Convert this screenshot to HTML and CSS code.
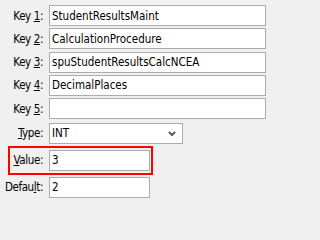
FILE: index.html
```html
<!DOCTYPE html>
<html>
<head>
<meta charset="utf-8">
<link rel="stylesheet" href="styles.css">
</head>
<body>
<div class="form">
  <div class="row key"><label class="lbl">Key <u>1</u>:</label><input class="field" value="StudentResultsMaint"></div>
  <div class="row key"><label class="lbl">Key <u>2</u>:</label><input class="field" value="CalculationProcedure"></div>
  <div class="row key"><label class="lbl">Key <u>3</u>:</label><input class="field" value="spuStudentResultsCalcNCEA"></div>
  <div class="row key"><label class="lbl">Key <u>4</u>:</label><input class="field" value="DecimalPlaces"></div>
  <div class="row key"><label class="lbl">Key <u>5</u>:</label><input class="field" value=""></div>
  <div class="row type"><label class="lbl"><u>T</u>ype:</label>
    <div class="select"><span>INT</span><svg class="chev" width="8" height="5" viewBox="0 0 8 5"><path d="M0.9 0.9 L4 4 L7.1 0.9" fill="none" stroke="#555555" stroke-width="2"/></svg></div>
  </div>
  <div class="row value"><label class="lbl"><u>V</u>alue:</label><input class="field short" value="3"></div>
  <div class="row default"><label class="lbl">Defau<u>l</u>t:</label><input class="field short" value="2"></div>
</div>
</body>
</html>
```
FILE: styles.css
```css
html, body {
  margin: 0;
  padding: 0;
  background: #f0f0f0;
}
body {
  font-family: "DejaVu Sans Condensed", "Liberation Sans", sans-serif;
  font-size: 11.5px;
  color: #000;
}
.form {
  box-sizing: border-box;
  width: 271px;
  display: flex;
  flex-direction: column;
  padding: 5px 5px 0 8px;
}
.row {
  display: grid;
  grid-template-columns: 35px 1fr;
  column-gap: 6px;
  align-items: center;
  justify-items: start;
}
.row.key + .row.key {
  margin-top: 2.33px;
}
.row.type {
  margin-top: 3.67px;
}
.row.value {
  margin-top: 2px;
  border: 2px solid #ff0000;
  padding: 2px 0;
  grid-template-columns: 33px 1fr;
  box-sizing: border-box;
  width: 145px;
}
.row.default {
  margin-top: 2px;
}
.lbl {
  justify-self: end;
  white-space: nowrap;
  letter-spacing: -0.4px;
}
.lbl u {
  text-underline-offset: 1px;
}
.field {
  box-sizing: border-box;
  width: 100%;
  height: 21px;
  margin: 0;
  border: 1px solid #acacac;
  background: #fff;
  padding: 0 2px;
  font: inherit;
  color: #000;
  outline: none;
}
.field.short {
  width: 101px;
}
.select {
  box-sizing: border-box;
  width: 134px;
  height: 21px;
  border: 1px solid #acacac;
  background: #fff;
  display: flex;
  align-items: center;
  justify-content: space-between;
  padding: 0 6px 0 2px;
}
.chev {
  display: block;
  margin-top: 1px;
}
```
